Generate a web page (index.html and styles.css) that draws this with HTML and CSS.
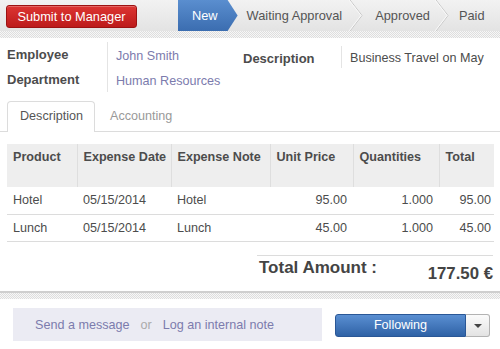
FILE: index.html
```html
<!DOCTYPE html>
<html>
<head>
<meta charset="utf-8">
<link rel="stylesheet" href="styles.css">
</head>
<body>
<div class="header">
  <button class="btn-submit">Submit to Manager</button>
  <div class="statusbar">
    <span class="step active">New</span>
    <span class="step s-wait">Waiting Approval</span>
    <svg class="chev c1" width="14" height="31" viewBox="0 0 14 31"><polyline points="1,0 13,15.5 1,31" fill="none" stroke="#c8c8c8" stroke-width="1"/><polyline points="0,0 12,15.5 0,31" fill="none" stroke="#fafafa" stroke-width="1"/></svg>
    <span class="step s-appr">Approved</span>
    <svg class="chev c2" width="14" height="31" viewBox="0 0 14 31"><polyline points="1,0 13,15.5 1,31" fill="none" stroke="#c8c8c8" stroke-width="1"/><polyline points="0,0 12,15.5 0,31" fill="none" stroke="#fafafa" stroke-width="1"/></svg>
    <span class="step s-paid">Paid</span>
  </div>
</div>
<div class="stripe"></div>
<div class="sheet">
  <div class="form">
    <div class="group g1">
      <div class="lbl">Employee</div><div class="val link">John Smith</div>
      <div class="lbl">Department</div><div class="val link">Human Resources</div>
    </div>
    <div class="group g2">
      <div class="lbl">Description</div><div class="val">Business Travel on May</div>
    </div>
  </div>
  <div class="tabs">
    <span class="tab active">Description</span>
    <span class="tab">Accounting</span>
  </div>
  <table class="lines">
    <thead>
      <tr>
        <th class="c-prod">Product</th>
        <th class="c-date">Expense Date</th>
        <th class="c-note">Expense Note</th>
        <th class="c-price">Unit Price</th>
        <th class="c-qty">Quantities</th>
        <th class="c-total">Total</th>
      </tr>
    </thead>
    <tbody>
      <tr><td>Hotel</td><td>05/15/2014</td><td>Hotel</td><td class="num">95.00</td><td class="num">1.000</td><td class="num last">95.00</td></tr>
      <tr><td>Lunch</td><td>05/15/2014</td><td>Lunch</td><td class="num">45.00</td><td class="num">1.000</td><td class="num last">45.00</td></tr>
    </tbody>
  </table>
  <div class="totals">
    <span class="t-label">Total Amount :</span>
    <span class="t-value">177.50 €</span>
  </div>
</div>
<div class="stripe bottom"></div>
<div class="chatter">
  <div class="composer">
    <span class="link">Send a message</span>
    <span class="or">or</span>
    <span class="link">Log an internal note</span>
  </div>
  <div class="follow">
    <span class="follow-main">Following</span>
    <span class="follow-drop"><span class="caret"></span></span>
  </div>
</div>
</body>
</html>
```
FILE: styles.css
```css
* { box-sizing: border-box; }
html, body { margin: 0; padding: 0; }
body {
  width: 500px;
  height: 349px;
  overflow: hidden;
  background: #fff;
  font-family: "Liberation Sans", Arial, sans-serif;
  font-size: 12.6px;
  color: #4c4c4c;
}
.link { color: #7c7bad; }

.header {
  height: 31px;
  display: flex;
  align-items: center;
  padding-left: 6px;
  background: linear-gradient(#f2f2f2, #e3e3e3);
}
.btn-submit {
  width: 131px;
  height: 23px;
  padding: 0;
  margin-top: 1px;
  font-family: inherit;
  font-size: 12.8px;
  color: #fff;
  background: linear-gradient(#dc3532, #bd1b1b);
  border: 1px solid #9c1212;
  border-radius: 3px;
  box-shadow: inset 0 1px 0 rgba(255,255,255,0.25);
}
.statusbar {
  display: flex;
  align-items: center;
  height: 31px;
  margin-left: 41px;
  flex: 1;
  font-size: 12.8px;
}
.step { color: #555; line-height: 31px; white-space: nowrap; }
.step.active {
  color: #fff;
  height: 31px;
  padding: 0 20px 0 14px;
  background: linear-gradient(#5a8ecf, #3b6db0);
  clip-path: polygon(0 0, calc(100% - 10px) 0, 100% 50%, calc(100% - 10px) 100%, 0 100%);
}
.s-wait { margin-left: 9px; }
.chev { display: block; flex: none; }
.c1 { margin-left: 7px; }
.s-appr { margin-left: 12px; }
.c2 { margin-left: 5px; }
.s-paid { margin-left: 10px; }

.stripe {
  height: 7px;
  background-color: #f4f4f4;
  background-image: repeating-conic-gradient(#dedede 0 25%, #f7f7f7 0 50%);
  background-size: 2px 2px;
}
.stripe.bottom {
  height: 8px;
  border-top: 2px solid #cfcfcf;
}

.sheet { height: 253px; }
.form {
  display: flex;
  padding: 4px 0 0 7px;
}
.group {
  display: grid;
  grid-template-columns: 100px 1fr;
  grid-auto-rows: 25px;
}
.g1 { width: 236px; }
.g2 { padding-top: 4px; grid-template-columns: 98px 1fr; }
.lbl {
  font-weight: bold;
  color: #4c4c4c;
  padding-top: 5px;
  font-size: 13px;
}
.val {
  border-left: 1px solid #e4e4e4;
  padding: 7px 0 0 8px;
  white-space: nowrap;
}
.g2 .val { padding-top: 5px; height: 22px; }

.tabs {
  display: flex;
  margin-top: 9px;
  height: 31px;
  border-bottom: 1px solid #dcdcdc;
  padding-left: 7px;
}
.tab {
  line-height: 29px;
  padding: 0 13px;
  color: #999;
  border: 1px solid transparent;
  border-bottom: none;
  border-radius: 4px 4px 0 0;
}
.tab.active {
  color: #555;
  background: #fff;
  border-color: #dcdcdc;
  height: 31px;
  width: 88px;
  padding-left: 12px;
}
.tab + .tab { padding-left: 14px; }

.lines {
  margin: 12px 0 0 7px;
  width: 487px;
  border-collapse: collapse;
  table-layout: fixed;
}
.lines th {
  height: 43px;
  background: #eeeeee;
  text-align: left;
  vertical-align: top;
  padding: 6px 6px 0;
  font-weight: bold;
  color: #4c4c4c;
  border-left: 1px solid #dedede;
  white-space: nowrap;
  overflow: hidden;
}
.lines th:first-child { border-left: none; }
.c-prod { width: 70px; }
.c-date { width: 94px; }
.c-note { width: 99px; }
.c-price { width: 83px; }
.c-qty { width: 86px; }
.c-total { width: 55px; }
.lines td {
  height: 27px;
  padding: 0 6px;
  border-bottom: 1px solid #dcdcdc;
  white-space: nowrap;
}
.lines td.num { text-align: right; }
.lines td.last { padding-right: 3px; }

.totals {
  margin: 13px 7px 0 257px;
  border-top: 1px solid #dcdcdc;
  display: flex;
  justify-content: space-between;
  font-weight: bold;
  font-size: 17px;
  color: #444;
}
.t-label { padding: 2px 0 0 2px; }
.t-value { padding: 8px 0 0 0; font-size: 16.8px; }

.chatter {
  display: flex;
  align-items: flex-start;
  padding: 9px 0 0 13px;
}
.composer {
  width: 309px;
  height: 33px;
  background: #ebebf3;
  display: flex;
  align-items: center;
  padding-left: 22px;
}
.composer .or { color: #aaa; margin: 0 11px; }
.follow {
  display: flex;
  margin: 6px 0 0 13px;
  height: 23px;
}
.follow-main {
  width: 131px;
  height: 23px;
  line-height: 21px;
  text-align: center;
  color: #fff;
  background: linear-gradient(#5a8fd2, #2f62a6);
  border: 1px solid #2a5796;
  border-radius: 3px 0 0 3px;
}
.follow-drop {
  width: 24px;
  height: 23px;
  display: flex;
  align-items: center;
  justify-content: center;
  background: linear-gradient(#fbfbfb, #e3e3e3);
  border: 1px solid #b3b3b3;
  border-left: none;
  border-radius: 0 3px 3px 0;
}
.caret {
  width: 0;
  height: 0;
  border-left: 4px solid transparent;
  border-right: 4px solid transparent;
  border-top: 4px solid #444;
}
```
